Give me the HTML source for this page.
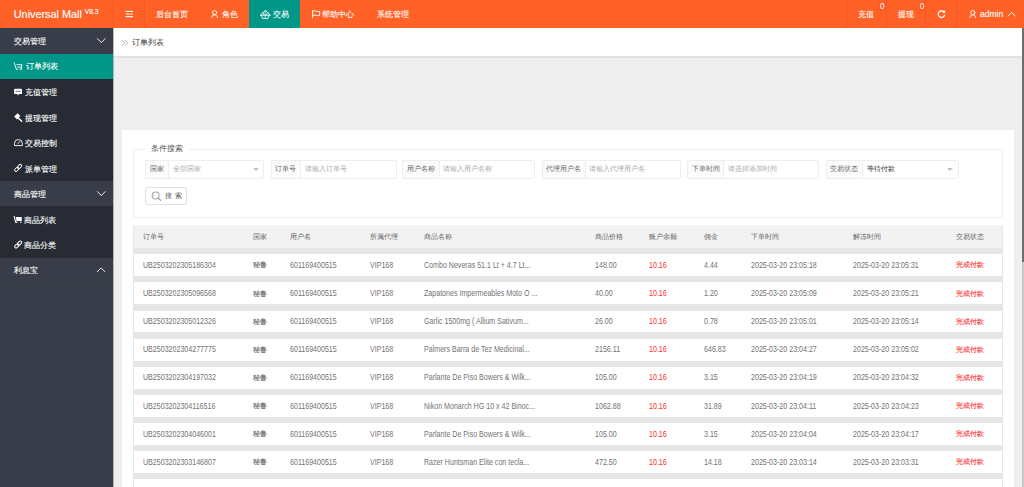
<!DOCTYPE html>
<html><head><meta charset="utf-8">
<style>
*{margin:0;padding:0;box-sizing:border-box}
html,body{width:1024px;height:487px;overflow:hidden;background:#eeeeee;font-family:"Liberation Sans",sans-serif;}
.a{position:absolute;white-space:nowrap}
#hd{left:0;top:0;width:1024px;height:28.4px;background:#ff6127}
.hv{color:#fff;font-size:8px;line-height:8px;top:10.8px;-webkit-text-stroke:0.1px #fff}
.dv{top:0;width:1px;height:28px;background:rgba(0,0,0,0.07)}
#sb{left:0;top:28.4px;width:113.4px;height:459px;background:#393d49}
.sg{left:0;width:113.4px;height:25.5px}
.st{color:#fff;font-size:8px;line-height:8px;left:14.4px;-webkit-text-stroke:0.12px #fff}
#bc{left:113.4px;top:28.4px;width:908.6px;height:28.4px;background:#fff;border-bottom:1px solid #e4e4e4;box-shadow:0 0.6px 1px rgba(0,0,0,0.06)}
#card{left:121.7px;top:130px;width:892px;height:400px;background:#fff}
.fl{height:18.6px;background:#fbfbfb;border:1px solid #eee;border-right:none;border-radius:2px 0 0 2px;font-size:6.8px;line-height:16.6px;color:#666;padding-left:0;text-align:center}
.fi{height:18.6px;background:#fff;border:1px solid #eee;border-radius:0 2px 2px 0;font-size:6.8px;line-height:16.6px;color:#aaa;padding-left:3.8px}
.tri{width:0;height:0;border-left:3px solid transparent;border-right:3px solid transparent;border-top:3.2px solid #c2c2c2}

.th{font-size:6.9px;line-height:8px;color:#666}
.td{font-size:8.2px;line-height:8px;color:#737373;transform:scaleX(.865);transform-origin:0 0}
.tdc{font-size:6.9px;line-height:8px;color:#666;-webkit-text-stroke:0.1px currentColor}
.red{color:#ff2d2d}
</style></head>
<body>
<div id="hd" class="a">
  <div class="a" style="left:13.8px;top:8px;color:#fff;font-size:10.84px;line-height:12px;-webkit-text-stroke:0.15px #fff">Universal Mall <sup style="font-size:6.6px;vertical-align:top;position:relative;top:-2.2px">V8.3</sup></div>
  <div class="a dv" style="left:113px"></div>
  <div class="a dv" style="left:144px"></div>
  <div class="a dv" style="left:846px"></div>
  <div class="a dv" style="left:886px"></div>
  <div class="a dv" style="left:925px"></div>
  <div class="a dv" style="left:956px"></div>
  <div class="a" style="left:248.6px;top:0;width:51.7px;height:28px;background:#009688"></div>
  <div class="a hv" style="left:156.4px">后台首页</div>
  <div class="a hv" style="left:221.6px">角色</div>
  <div class="a hv" style="left:272.8px">交易</div>
  <div class="a hv" style="left:322.2px">帮助中心</div>
  <div class="a hv" style="left:376.9px">系统管理</div>
  <div class="a hv" style="left:858px">充值</div>
  <div class="a hv" style="left:897.6px">提现</div>
  <div class="a hv" style="left:979.9px;font-size:8.6px;top:10px">admin</div>
  <div class="a" style="left:877.7px;top:1.5px;width:9px;height:9px;border-radius:4.5px;background:#ff5722"></div>
  <div class="a" style="left:917.5px;top:1.5px;width:9px;height:9px;border-radius:4.5px;background:#ff5722"></div>
  <div class="a" style="left:879.9px;top:1.6px;font-size:8.4px;line-height:8px;color:#fff">0</div>
  <div class="a" style="left:919.7px;top:1.6px;font-size:8.4px;line-height:8px;color:#fff">0</div>
</div>
<div id="sb" class="a">
  <div class="a sg" style="top:0"></div>
  <div class="a sg" style="top:25.5px;background:#282b33;height:204px"></div>
  <div class="a sg" style="top:25.5px;background:#009688"></div>
  <div class="a sg" style="top:152.5px;background:#393d49"></div>
  <div class="a sg" style="top:229.5px;background:#393d49"></div>
  <div class="a st" style="top:9.8px">交易管理</div>
  <div class="a st" style="top:34.5px;left:25.6px">订单列表</div>
  <div class="a st" style="top:60.6px;left:25.1px">充值管理</div>
  <div class="a st" style="top:86.2px;left:25.1px">提现管理</div>
  <div class="a st" style="top:111.7px;left:25.1px">交易控制</div>
  <div class="a st" style="top:137.2px;left:25.1px">派单管理</div>
  <div class="a st" style="top:162.8px">商品管理</div>
  <div class="a st" style="top:188.2px;left:24.4px">商品列表</div>
  <div class="a st" style="top:213.7px;left:24.4px">商品分类</div>
  <div class="a st" style="top:238.7px">利息宝</div>
</div>
<div id="bc" class="a">
    <div class="a" style="left:18.3px;top:11px;font-size:8px;line-height:8px;color:#333">订单列表</div>
</div>
<div class="a" style="left:1022px;top:28px;width:2px;height:459px;background:#c8c8c8"></div>
<div class="a" style="left:1022px;top:28px;width:2px;height:234px;background:#6e6e6e"></div>
<div id="card" class="a"></div>
<div class="a" style="left:113px;top:28px;width:1px;height:459px;background:rgba(40,43,51,0.3)"></div>
<div class="a" style="left:0;top:282.5px;width:113px;height:1px;background:rgba(0,0,0,0.06)"></div>
<!-- fieldset -->
<div class="a" style="left:133.2px;top:148.8px;width:870.1px;height:69px;border:1px solid #eee;border-radius:2px"></div>
<div class="a" style="left:144.8px;top:145px;width:43.8px;height:8px;background:#fff"></div>
<div class="a" style="left:151px;top:144.7px;font-size:8px;line-height:8px;color:#555">条件搜索</div>
<!-- form items -->
<div class="a fl" style="left:145.3px;top:160.3px;width:22.85px">国家</div>
<div class="a fi" style="left:168.15px;top:160.3px;width:96.25px">全部国家</div>
<div class="a tri" style="left:253px;top:168px"></div>
<div class="a fl" style="left:270.6px;top:160.3px;width:29.40px">订单号</div>
<div class="a fi" style="left:300.00px;top:160.3px;width:96.70px">请输入订单号</div>
<div class="a fl" style="left:402.3px;top:160.3px;width:36.30px">用户名称</div>
<div class="a fi" style="left:438.60px;top:160.3px;width:96.60px">请输入用户名称</div>
<div class="a fl" style="left:541.6px;top:160.3px;width:43.10px">代理用户名</div>
<div class="a fi" style="left:584.70px;top:160.3px;width:95.90px">请输入代理用户名</div>
<div class="a fl" style="left:687px;top:160.3px;width:36.15px">下单时间</div>
<div class="a fi" style="left:723.15px;top:160.3px;width:96.35px">请选择添加时间</div>
<div class="a fl" style="left:825.5px;top:160.3px;width:36.60px">交易状态</div>
<div class="a fi" style="left:862.10px;top:160.3px;width:96.50px;color:#333">等待付款</div>
<div class="a tri" style="left:947px;top:168px"></div>
<!-- search button -->
<div class="a" style="left:145.3px;top:186.9px;width:41.7px;height:18.2px;border:1px solid #e2e2e2;border-radius:2px;background:#fff"></div>
<div class="a" style="left:165.2px;top:192px;font-size:6.8px;line-height:8px;color:#555;letter-spacing:2.5px">搜索</div>

<div class="a" style="left:133.2px;top:224.9px;width:869.80px;height:23.1px;background:#f2f2f2"></div>
<div class="a" style="left:133.2px;top:248.00px;width:869.80px;height:6.3px;background:#e6e6e6"></div>
<div class="a" style="left:133.2px;top:276.12px;width:869.80px;height:6.3px;background:#e6e6e6"></div>
<div class="a" style="left:133.2px;top:304.25px;width:869.80px;height:6.3px;background:#e6e6e6"></div>
<div class="a" style="left:133.2px;top:332.38px;width:869.80px;height:6.3px;background:#e6e6e6"></div>
<div class="a" style="left:133.2px;top:360.50px;width:869.80px;height:6.3px;background:#e6e6e6"></div>
<div class="a" style="left:133.2px;top:388.62px;width:869.80px;height:6.3px;background:#e6e6e6"></div>
<div class="a" style="left:133.2px;top:416.75px;width:869.80px;height:6.3px;background:#e6e6e6"></div>
<div class="a" style="left:133.2px;top:444.88px;width:869.80px;height:6.3px;background:#e6e6e6"></div>
<div class="a" style="left:133.2px;top:473.00px;width:869.80px;height:6.3px;background:#e6e6e6"></div>
<div class="a" style="left:133.2px;top:224.9px;width:1px;height:262.1px;background:#e6e6e6"></div>
<div class="a" style="left:1002.0px;top:224.9px;width:1px;height:262.1px;background:#e6e6e6"></div>
<div class="a th" style="left:142.5px;top:233.10px">订单号</div>
<div class="a th" style="left:252.5px;top:233.10px">国家</div>
<div class="a th" style="left:290px;top:233.10px">用户名</div>
<div class="a th" style="left:369.7px;top:233.10px">所属代理</div>
<div class="a th" style="left:423.75px;top:233.10px">商品名称</div>
<div class="a th" style="left:595.2px;top:233.10px">商品价格</div>
<div class="a th" style="left:649.1px;top:233.10px">账户余额</div>
<div class="a th" style="left:703.5px;top:233.10px">佣金</div>
<div class="a th" style="left:750.6px;top:233.10px">下单时间</div>
<div class="a th" style="left:853.2px;top:233.10px">解冻时间</div>
<div class="a th" style="left:956.1px;top:233.10px">交易状态</div>
<div class="a td" style="left:142.5px;top:261.90px">UB2503202305186304</div>
<div class="a tdc" style="left:252.5px;top:261.40px">秘鲁</div>
<div class="a td" style="left:290px;top:261.90px">601169400515</div>
<div class="a td" style="left:369.7px;top:261.90px">VIP168</div>
<div class="a td" style="left:423.75px;top:261.90px">Combo Neveras 51.1 Lt + 4.7 Lt...</div>
<div class="a td" style="left:595.2px;top:261.90px">148.00</div>
<div class="a td red" style="left:649.1px;top:261.90px">10.16</div>
<div class="a td" style="left:703.5px;top:261.90px">4.44</div>
<div class="a td" style="left:750.6px;top:261.90px">2025-03-20 23:05:18</div>
<div class="a td" style="left:853.2px;top:261.90px">2025-03-20 23:05:31</div>
<div class="a tdc red" style="left:956.1px;top:261.40px">完成付款</div>
<div class="a td" style="left:142.5px;top:290.03px">UB2503202305096568</div>
<div class="a tdc" style="left:252.5px;top:289.53px">秘鲁</div>
<div class="a td" style="left:290px;top:290.03px">601169400515</div>
<div class="a td" style="left:369.7px;top:290.03px">VIP168</div>
<div class="a td" style="left:423.75px;top:290.03px">Zapatones Impermeables Moto O ...</div>
<div class="a td" style="left:595.2px;top:290.03px">40.00</div>
<div class="a td red" style="left:649.1px;top:290.03px">10.16</div>
<div class="a td" style="left:703.5px;top:290.03px">1.20</div>
<div class="a td" style="left:750.6px;top:290.03px">2025-03-20 23:05:09</div>
<div class="a td" style="left:853.2px;top:290.03px">2025-03-20 23:05:21</div>
<div class="a tdc red" style="left:956.1px;top:289.53px">完成付款</div>
<div class="a td" style="left:142.5px;top:318.15px">UB2503202305012326</div>
<div class="a tdc" style="left:252.5px;top:317.65px">秘鲁</div>
<div class="a td" style="left:290px;top:318.15px">601169400515</div>
<div class="a td" style="left:369.7px;top:318.15px">VIP168</div>
<div class="a td" style="left:423.75px;top:318.15px">Garlic 1500mg ( Allium Sativum...</div>
<div class="a td" style="left:595.2px;top:318.15px">26.00</div>
<div class="a td red" style="left:649.1px;top:318.15px">10.16</div>
<div class="a td" style="left:703.5px;top:318.15px">0.78</div>
<div class="a td" style="left:750.6px;top:318.15px">2025-03-20 23:05:01</div>
<div class="a td" style="left:853.2px;top:318.15px">2025-03-20 23:05:14</div>
<div class="a tdc red" style="left:956.1px;top:317.65px">完成付款</div>
<div class="a td" style="left:142.5px;top:346.28px">UB2503202304277775</div>
<div class="a tdc" style="left:252.5px;top:345.78px">秘鲁</div>
<div class="a td" style="left:290px;top:346.28px">601169400515</div>
<div class="a td" style="left:369.7px;top:346.28px">VIP168</div>
<div class="a td" style="left:423.75px;top:346.28px">Palmers Barra de Tez Medicinal...</div>
<div class="a td" style="left:595.2px;top:346.28px">2156.11</div>
<div class="a td red" style="left:649.1px;top:346.28px">10.16</div>
<div class="a td" style="left:703.5px;top:346.28px">646.83</div>
<div class="a td" style="left:750.6px;top:346.28px">2025-03-20 23:04:27</div>
<div class="a td" style="left:853.2px;top:346.28px">2025-03-20 23:05:02</div>
<div class="a tdc red" style="left:956.1px;top:345.78px">完成付款</div>
<div class="a td" style="left:142.5px;top:374.40px">UB2503202304197032</div>
<div class="a tdc" style="left:252.5px;top:373.90px">秘鲁</div>
<div class="a td" style="left:290px;top:374.40px">601169400515</div>
<div class="a td" style="left:369.7px;top:374.40px">VIP168</div>
<div class="a td" style="left:423.75px;top:374.40px">Parlante De Piso Bowers &amp; Wilk...</div>
<div class="a td" style="left:595.2px;top:374.40px">105.00</div>
<div class="a td red" style="left:649.1px;top:374.40px">10.16</div>
<div class="a td" style="left:703.5px;top:374.40px">3.15</div>
<div class="a td" style="left:750.6px;top:374.40px">2025-03-20 23:04:19</div>
<div class="a td" style="left:853.2px;top:374.40px">2025-03-20 23:04:32</div>
<div class="a tdc red" style="left:956.1px;top:373.90px">完成付款</div>
<div class="a td" style="left:142.5px;top:402.53px">UB2503202304116516</div>
<div class="a tdc" style="left:252.5px;top:402.03px">秘鲁</div>
<div class="a td" style="left:290px;top:402.53px">601169400515</div>
<div class="a td" style="left:369.7px;top:402.53px">VIP168</div>
<div class="a td" style="left:423.75px;top:402.53px">Nikon Monarch HG 10 x 42 Binoc...</div>
<div class="a td" style="left:595.2px;top:402.53px">1062.88</div>
<div class="a td red" style="left:649.1px;top:402.53px">10.16</div>
<div class="a td" style="left:703.5px;top:402.53px">31.89</div>
<div class="a td" style="left:750.6px;top:402.53px">2025-03-20 23:04:11</div>
<div class="a td" style="left:853.2px;top:402.53px">2025-03-20 23:04:23</div>
<div class="a tdc red" style="left:956.1px;top:402.03px">完成付款</div>
<div class="a td" style="left:142.5px;top:430.65px">UB2503202304046001</div>
<div class="a tdc" style="left:252.5px;top:430.15px">秘鲁</div>
<div class="a td" style="left:290px;top:430.65px">601169400515</div>
<div class="a td" style="left:369.7px;top:430.65px">VIP168</div>
<div class="a td" style="left:423.75px;top:430.65px">Parlante De Piso Bowers &amp; Wilk...</div>
<div class="a td" style="left:595.2px;top:430.65px">105.00</div>
<div class="a td red" style="left:649.1px;top:430.65px">10.16</div>
<div class="a td" style="left:703.5px;top:430.65px">3.15</div>
<div class="a td" style="left:750.6px;top:430.65px">2025-03-20 23:04:04</div>
<div class="a td" style="left:853.2px;top:430.65px">2025-03-20 23:04:17</div>
<div class="a tdc red" style="left:956.1px;top:430.15px">完成付款</div>
<div class="a td" style="left:142.5px;top:458.78px">UB2503202303146807</div>
<div class="a tdc" style="left:252.5px;top:458.28px">秘鲁</div>
<div class="a td" style="left:290px;top:458.78px">601169400515</div>
<div class="a td" style="left:369.7px;top:458.78px">VIP168</div>
<div class="a td" style="left:423.75px;top:458.78px">Razer Huntsman Elite con tecla...</div>
<div class="a td" style="left:595.2px;top:458.78px">472.50</div>
<div class="a td red" style="left:649.1px;top:458.78px">10.16</div>
<div class="a td" style="left:703.5px;top:458.78px">14.18</div>
<div class="a td" style="left:750.6px;top:458.78px">2025-03-20 23:03:14</div>
<div class="a td" style="left:853.2px;top:458.78px">2025-03-20 23:03:31</div>
<div class="a tdc red" style="left:956.1px;top:458.28px">完成付款</div>
<svg class="a" style="left:0;top:0" width="1024" height="487" viewBox="0 0 1024 487">
<g fill="none" stroke="#fff" stroke-linecap="round" stroke-linejoin="round">
  <!-- hamburger -->
  <rect x="125.4" y="10.9" width="7.6" height="1.1" fill="#fff" stroke="none"/>
  <rect x="126" y="13.3" width="3.6" height="1.5" fill="#fff" fill-opacity="0.75" stroke="none"/>
  <rect x="130.8" y="13.3" width="1.5" height="1.5" fill="#fff" stroke="none"/>
  <rect x="125.4" y="16.1" width="7.6" height="1.1" fill="#fff" stroke="none"/>
  <!-- user (角色) -->
  <circle cx="214.6" cy="12.6" r="2.1" stroke-width="0.9"/>
  <path d="M211.6 17.6 Q211.9 14.7 214.6 14.7 Q217.3 14.7 217.6 17.6" stroke-width="0.9"/>
  <!-- 交易 icon -->
  <path d="M265.2 10.6 L260.3 15.2 H270.1 Z" stroke-width="0.9"/>
  <path d="M265.2 10.6 V18.6 M262.9 12.8 L264 15.2 M267.5 12.8 L266.4 15.2" stroke-width="0.7"/>
  <path d="M261.3 15.2 L262.6 18.6 H267.8 L269.1 15.2" stroke-width="0.9"/>
  <!-- flag -->
  <path d="M312.6 10.6 V17.8" stroke-width="1"/>
  <path d="M313.1 11.1 Q315 10.6 316.5 11.3 Q318 12 319.6 11.2 V15.4 Q318 16.1 316.5 15.4 Q315 14.7 313.1 15.4" stroke-width="0.9"/>
  <!-- refresh -->
  <path d="M944 12 A3.3 3.3 0 1 0 944.6 15.3" stroke-width="1.3"/>
  <path d="M945.2 10.1 V13.1 H942.3 Z" fill="#fff" stroke="none"/>
  <!-- user admin -->
  <circle cx="972.8" cy="12.6" r="2.1" stroke-width="0.9"/>
  <path d="M969.8 17.6 Q970.1 14.7 972.8 14.7 Q975.5 14.7 975.8 17.6" stroke-width="0.9"/>
  <!-- chevron up (header) -->
  <path d="M1008.3 15.9 L1011.7 12.5 L1015.1 15.9" stroke-width="1"/>
  <!-- sidebar chevrons -->
  <path d="M97.4 38.6 L101.3 42.6 L105.2 38.6" stroke-width="0.9"/>
  <path d="M97.4 191.6 L101.3 195.6 L105.2 191.6" stroke-width="0.9"/>
  <path d="M97.2 271.8 L101.1 267.9 L105 271.8" stroke-width="0.9"/>
  <!-- cart outline (订单列表) -->
  <path d="M14.2 62.8 L16.4 69.4 M16.9 64.7 H21.9 L21.1 69.4 M16.4 69.4 H17.4 M20.1 69.4 H21.1 M17.6 67.2 H21.4" stroke-width="0.9"/>
  <!-- monitor (充值) -->
  <path d="M14.1 89.6 Q14.1 88.8 15 88.8 H21.2 Q22 88.8 22 89.6 V93.9 H14.1 Z" fill="#fff" stroke="none"/>
  <rect x="17.4" y="93.8" width="1.2" height="1.4" fill="#fff" stroke="none"/>
  <path d="M16 91.3 H20.2" stroke="#282b33" stroke-width="0.7"/>
  <!-- gavel (提现) -->
  <path d="M14.2 116.6 L17.6 113.2 L20.4 116 L17 119.4 Z" fill="#fff" stroke="none"/>
  <path d="M18.6 118.4 L21.8 121.2" stroke-width="1.4"/>
  <!-- gauge (交易控制) -->
  <path d="M14.5 145.2 V143.4 A3.9 3.9 0 0 1 22.3 143.4 V145.2 Z" stroke-width="0.9"/>
  <path d="M17.7 143.9 L19.9 141.4" stroke-width="0.8"/>
  <!-- link (派单管理) -->
  <g transform="translate(18.2 167.9) rotate(-45) scale(0.88)">
    <rect x="-5" y="-1.6" width="5.6" height="3.2" rx="1.6" stroke-width="1.1"/>
    <rect x="-0.6" y="-1.6" width="5.6" height="3.2" rx="1.6" stroke-width="1.1"/>
  </g>
  <!-- filled cart (商品列表) -->
  <path d="M14.2 216.3 L15.7 222.4" stroke-width="1.1"/>
  <path d="M15.9 217.1 H21.8 V220.9 H16.4 Z" fill="#fff" stroke="none"/>
  <circle cx="16.8" cy="222.3" r="0.8" fill="#fff" stroke="none"/>
  <circle cx="20.8" cy="222.3" r="0.8" fill="#fff" stroke="none"/>
  <!-- link (商品分类) -->
  <g transform="translate(18.2 244.5) rotate(-45) scale(0.88)">
    <rect x="-5" y="-1.6" width="5.6" height="3.2" rx="1.6" stroke-width="1.1"/>
    <rect x="-0.6" y="-1.6" width="5.6" height="3.2" rx="1.6" stroke-width="1.1"/>
  </g>
  <!-- breadcrumb raquo -->
  <path d="M122.3 40.3 L124.8 42.9 L122.3 45.5 M125.3 40.3 L127.8 42.9 L125.3 45.5" stroke="#999" stroke-width="0.7"/>
  <!-- search magnifier -->
  <circle cx="155.6" cy="195.5" r="3.45" stroke="#a6a6a6" stroke-width="1.1"/>
  <path d="M153.8 194 Q153.3 195 153.7 196.4" stroke="#bbb" stroke-width="0.6"/>
  <path d="M158.3 198.1 L160.5 200.3" stroke="#a0a0a0" stroke-width="1.3"/>
</g>
</svg>

</body></html>
